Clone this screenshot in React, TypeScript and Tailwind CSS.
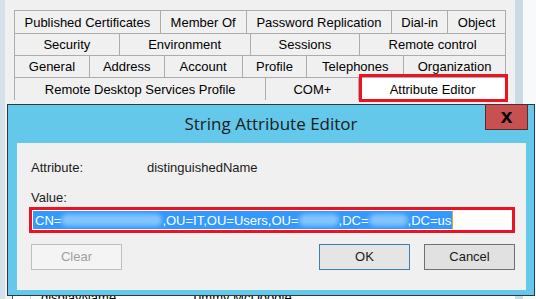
import React from "react";

const Tab = ({ w, label }: { w: string; label: string }) => (
  <div className={`${w} h-full flex items-center justify-center border-r border-[#acacac] bg-[#f0f0f0] whitespace-nowrap`}>
    {label}
  </div>
);

const Blur = ({ w }: { w: string }) => (
  <span className={`inline-block ${w} h-[12px] align-middle rounded-full bg-[#82c4ff] blur-[2px]`} />
);

export default function App() {
  return (
    <div className="relative w-[536px] h-[299px] overflow-hidden bg-[#f0f0f0] flex font-['Liberation_Sans',Arial,sans-serif] text-[13px] text-black">
      <div className="w-[5px] bg-[#d5e1e8]" />
      <div className="w-[510px] flex flex-col pt-[10px] pl-[9px]">
        <div className="w-[492px] flex flex-col border-l border-[#acacac] leading-none">
          <div className="h-[23px] flex border-t border-[#acacac]">
            <Tab w="w-[146px]" label="Published Certificates" />
            <Tab w="w-[86px]" label="Member Of" />
            <Tab w="w-[146px]" label="Password Replication" />
            <Tab w="w-[56px]" label="Dial-in" />
            <Tab w="w-[58px]" label="Object" />
          </div>
          <div className="h-[22px] flex border-t border-[#acacac]">
            <Tab w="w-[105px]" label="Security" />
            <Tab w="w-[131px]" label="Environment" />
            <Tab w="w-[110px]" label="Sessions" />
            <Tab w="w-[146px]" label="Remote control" />
          </div>
          <div className="h-[22px] flex border-t border-[#acacac]">
            <Tab w="w-[75px]" label="General" />
            <Tab w="w-[75px]" label="Address" />
            <Tab w="w-[78px]" label="Account" />
            <Tab w="w-[65px]" label="Profile" />
            <Tab w="w-[97px]" label="Telephones" />
            <Tab w="w-[102px]" label="Organization" />
          </div>
          <div className="h-[23px] flex border-t border-[#acacac]">
            <Tab w="w-[252px]" label="Remote Desktop Services Profile" />
            <Tab w="w-[93px]" label="COM+" />
            <div className="relative w-[147px] h-full flex items-center justify-center bg-white whitespace-nowrap">
              Attribute Editor
              <div className="absolute left-0 right-[-2px] top-[-4px] bottom-[-2px] border-[3px] border-[#ee1122]" />
            </div>
          </div>
        </div>
        <div className="h-[195px]" />
        <div className="relative h-[10px] bg-white border-l border-[#555] ml-[-2px] flex text-[13px] leading-[16px]">
          <div className="w-[18px] border-r border-[#d0d0d0]" />
          <div className="pl-[10px] w-[160px] pt-[1px]">displayName</div>
          <div className="pt-[1px]">Timmy McDoodle</div>
        </div>
      </div>
      <div className="w-[8px] bg-[#c9dbe5]" />
      <div className="flex-1 bg-[#f7f9fa]" />

      {/* Dialog window */}
      <div className="absolute left-[7px] top-[104px] w-[528px] h-[192px] border border-[#2f3a40] bg-[#63c8e9] flex flex-col">
        <div className="relative h-[38px] flex items-center justify-center font-['Open_Sans',sans-serif] text-[17px] text-[#1b1b1b]">
          String Attribute Editor
          <div className="absolute right-[6px] top-[-1px] w-[43px] h-[26px] bg-[#c75050] border border-[#5b2a2a] flex items-center justify-center font-['Liberation_Sans',Arial,sans-serif] font-bold text-[21px] text-black leading-none pb-[3px]">
            x
          </div>
        </div>
        <div className="ml-[9px] mr-[8px] h-[147px] bg-[#f0f0f0] flex flex-col pl-[14px] pr-[11px] text-[#1a1a1a]">
          <div className="mt-[17px] flex leading-[15px]">
            <div className="w-[116px]">Attribute:</div>
            <div>distinguishedName</div>
          </div>
          <div className="mt-[15px] leading-[15px]">Value:</div>
          <div className="relative mt-[2px] ml-[-2px] h-[26px] border-[3px] border-[#ee1122] bg-white flex items-center pl-[1px]">
            <div className="h-[18px] flex items-center bg-[#3399ff] text-white pl-[2px] pr-[1px] whitespace-nowrap leading-none">
              <span>CN=</span>
              <Blur w="w-[101px]" />
              <span>,OU=IT,OU=Users,OU=</span>
              <Blur w="w-[40px]" />
              <span>,DC=</span>
              <Blur w="w-[39px]" />
              <span>,DC=us</span>
            </div>
            <div className="w-[1px] h-[18px] bg-[#f0a030]" />
          </div>
          <div className="mt-[11px] flex">
            <div className="w-[91px] h-[26px] border border-[#bfbfbf] bg-[#f4f4f4] text-[#a0a0a0] flex items-center justify-center">
              Clear
            </div>
            <div className="flex-1" />
            <div className="w-[91px] h-[26px] border border-[#3c7fb1] bg-[#e5e5e5] flex items-center justify-center">
              OK
            </div>
            <div className="ml-[14px] w-[91px] h-[26px] border border-[#707070] bg-[#e1e1e1] flex items-center justify-center">
              Cancel
            </div>
          </div>
        </div>
      </div>
    </div>
  );
}
